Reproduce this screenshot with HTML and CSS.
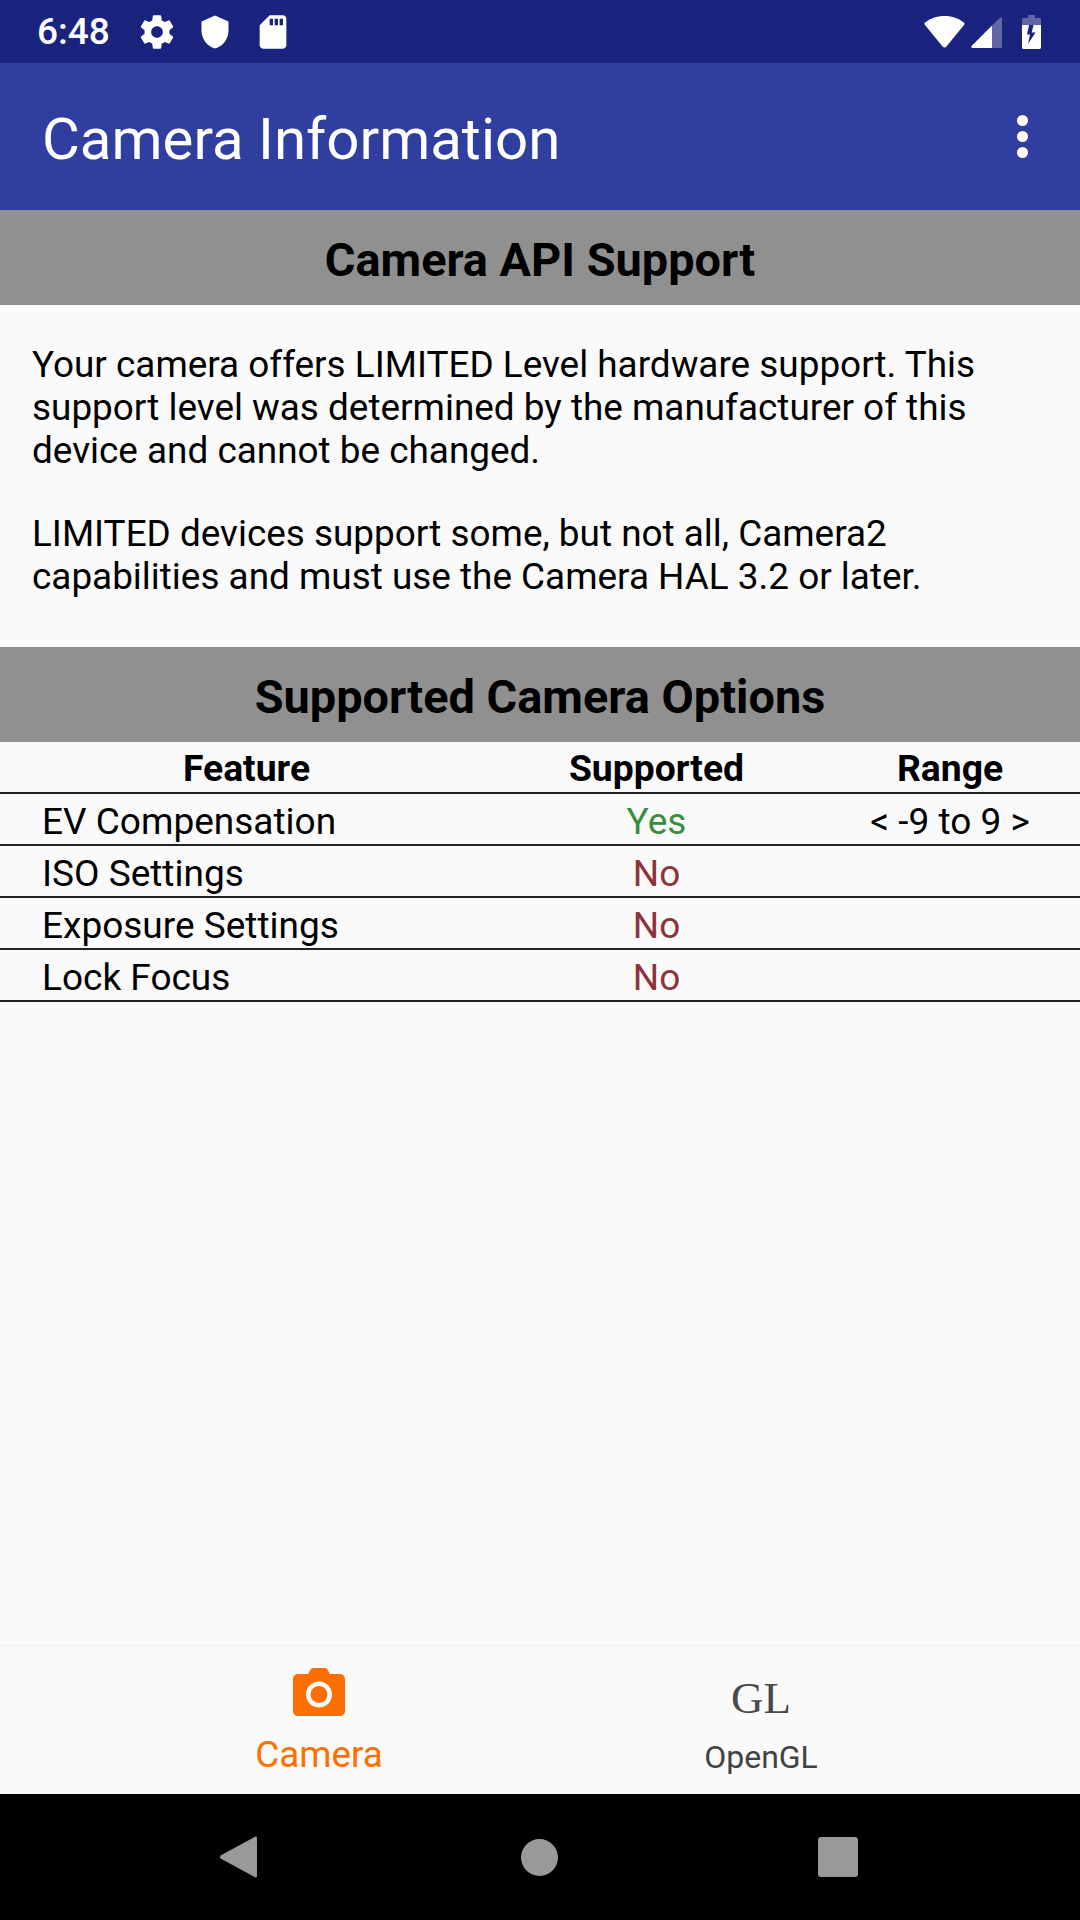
FILE: index.html
```html
<!DOCTYPE html>
<html lang="en">
<head>
    <meta charset="UTF-8">
    <meta name="viewport" content="width=device-width, initial-scale=1.0">
    <title>Camera Information</title>
    <link rel="stylesheet" href="styles.css">
</head>
<body>
    <div class="app">
        <!-- status bar -->
        <div class="statusbar">
            <span class="time">6:48</span>
            <svg class="st-gear" viewBox="0 0 24 24"><path fill="#fff" d="M19.43 12.98c.04-.32.07-.64.07-.98s-.03-.66-.07-.98l2.11-1.65c.19-.15.24-.42.12-.64l-2-3.46c-.12-.22-.39-.3-.61-.22l-2.49 1c-.52-.4-1.08-.73-1.69-.98l-.38-2.65C14.46 2.18 14.25 2 14 2h-4c-.25 0-.46.18-.49.42l-.38 2.65c-.61.25-1.17.59-1.69.98l-2.49-1c-.23-.09-.49 0-.61.22l-2 3.46c-.13.22-.07.49.12.64l2.11 1.65c-.04.32-.07.65-.07.98s.03.66.07.98l-2.11 1.65c-.19.15-.24.42-.12.64l2 3.46c.12.22.39.3.61.22l2.49-1c.52.4 1.08.73 1.69.98l.38 2.65c.03.24.24.42.49.42h4c.25 0 .46-.18.49-.42l.38-2.65c.61-.25 1.17-.59 1.69-.98l2.49 1c.23.09.49 0 .61-.22l2-3.46c.12-.22.07-.49-.12-.64l-2.11-1.65zM12 15.5c-1.93 0-3.5-1.57-3.5-3.5s1.57-3.5 3.5-3.5 3.5 1.57 3.5 3.5-1.57 3.5-3.5 3.5z"/></svg>
            <svg class="st-shield" viewBox="0 0 24 24"><path fill="#fff" d="M12 1L3 5v6c0 5.55 3.84 10.74 9 12 5.16-1.26 9-6.45 9-12V5l-9-4z"/></svg>
            <svg class="st-sd" viewBox="0 0 24 24"><path fill="#fff" d="M18 2h-8L4.02 8 4 20c0 1.1.9 2 2 2h12c1.1 0 2-.9 2-2V4c0-1.1-.9-2-2-2zm-6 6h-2V4h2v4zm3 0h-2V4h2v4zm3 0h-2V4h2v4z"/></svg>
            <span class="spacer"></span>
            <svg class="st-wifi" viewBox="0 0 42 33"><path fill="#fff" d="M21 0C13 0 6 2.6 1 6.8c-.8.7-.9 1.5-.3 2.2L19 31.5c1 1.3 3 1.3 4 0L41.300 9c.6-.7.5-1.500-.3-2.200C36 2.600 29 0 21 0z"/></svg>
            <svg class="st-signal" viewBox="0 0 31 31"><path fill="#fff" fill-opacity=".3" d="M31 1.500c0-1.200-1-1.800-2-.8L21 8.500V31h8.500c.9 0 1.500-.6 1.500-1.500z"/><path fill="#fff" d="M21 8.500L.6 28.900c-.8.8-.3 2.100.9 2.100H21z"/></svg>
            <svg class="st-battery" viewBox="0 0 19 34"><path fill="#fff" fill-opacity=".3" d="M13 3V1c0-.6-.4-1-1-1H7c-.6 0-1 .4-1 1v2H1.500C.7 3 0 3.700 0 4.500V10h19V4.500C19 3.700 18.300 3 17.500 3z"/><path fill="#fff" fill-rule="evenodd" d="M0 10v22.500C0 33.300.7 34 1.500 34h16c.8 0 1.500-.7 1.500-1.500V10zM11.500 10l-1.800 7.500h3.800L6 29l2-9.500H5L7 10z"/></svg>
        </div>

        <!-- toolbar -->
        <div class="toolbar">
            <h1>Camera Information</h1>
            <div class="overflow"><i></i><i></i><i></i></div>
        </div>

        <div class="content">
            <h2 class="section-title">Camera API Support</h2>
            <div class="about">
                <p>Your camera offers LIMITED Level hardware support. This support level was determined by the manufacturer of this device and cannot be changed.</p>
                <p>LIMITED devices support some, but not all, Camera2 capabilities and must use the Camera HAL 3.2 or later.</p>
            </div>

            <h2 class="section-title">Supported Camera Options</h2>
            <div class="options">
                <div class="row head">
                    <span>Feature</span>
                    <span>Supported</span>
                    <span>Range</span>
                </div>
                <div class="row">
                    <span class="name">EV Compensation</span>
                    <span class="yes">Yes</span>
                    <span>&lt; -9 to 9 &gt;</span>
                </div>
                <div class="row">
                    <span class="name">ISO Settings</span>
                    <span class="no">No</span>
                    <span></span>
                </div>
                <div class="row">
                    <span class="name">Exposure Settings</span>
                    <span class="no">No</span>
                    <span></span>
                </div>
                <div class="row">
                    <span class="name">Lock Focus</span>
                    <span class="no">No</span>
                    <span></span>
                </div>
            </div>
        </div>

        <!-- bottom tabs -->
        <div class="tabs">
            <div class="tab active">
                <svg class="tab-icon" viewBox="0 0 52 48"><path fill="#ff6f00" fill-rule="evenodd" d="M5 6h10l2.500-4.200C18.200.7 19 0 20.500 0h11c1.500 0 2.300.7 3 1.800L37 6h10c2.800 0 5 2.200 5 5v32c0 2.800-2.200 5-5 5H5c-2.800 0-5-2.200-5-5V11c0-2.800 2.200-5 5-5zm21 7.500a13 13 0 1 0 0 26 13 13 0 0 0 0-26zm0 4.500a8.500 8.500 0 1 1 0 17 8.500 8.500 0 0 1 0-17z"/></svg>
                <span class="tab-label">Camera</span>
            </div>
            <div class="tab">
                <span class="gl-icon">GL</span>
                <span class="tab-label">OpenGL</span>
            </div>
        </div>

        <!-- navigation bar -->
        <div class="navbar">
            <svg class="nav-back" viewBox="0 0 38 42"><path fill="#999" d="M36 .3L1 19.100c-1.300 1-1.300 2.800 0 3.800l35 18.800c1 .7 2 0 2-1.200V1.500c0-1.200-1-1.900-2-1.200z"/></svg>
            <span class="nav-home"></span>
            <span class="nav-recent"></span>
        </div>
    </div>
</body>
</html>
```

FILE: styles.css
```css
* {
    margin: 0;
    padding: 0;
    box-sizing: border-box;
}

body {
    background: #fafafa;
    font-family: Roboto, sans-serif;
    color: #000;
}

.app {
    display: flex;
    flex-direction: column;
    height: 1920px;
}

.statusbar {
    flex: 0 0 63px;
    display: flex;
    align-items: center;
    padding: 0 39px 0 37px;
    background: #1a237e;
    color: #fff;
}

.time {
    width: 71px;
    font-size: 37px;
    font-weight: 500;
}

.spacer {
    flex: 1;
}

.st-gear {
    width: 40px;
    height: 40px;
    margin-left: 29px;
}

.st-shield {
    width: 36px;
    height: 36px;
    margin-left: 20px;
}

.st-sd {
    width: 40px;
    height: 40px;
    margin-left: 20px;
}

.st-wifi {
    width: 41px;
    height: 32px;
}

.st-signal {
    width: 31px;
    height: 31px;
    margin-left: 6px;
    margin-top: 2px;
}

.st-battery {
    width: 19px;
    height: 34px;
    margin-left: 20px;
}

.toolbar {
    flex: 0 0 147px;
    display: flex;
    align-items: center;
    justify-content: space-between;
    padding: 4px 52px 0 42px;
    background: #303f9f;
}

.toolbar h1 {
    font-size: 58.200px;
    font-weight: 400;
    color: #fff;
}

.overflow {
    display: flex;
    flex-direction: column;
    gap: 5px;
    margin-top: -4px;
}

.overflow i {
    display: block;
    width: 11px;
    height: 11px;
    border-radius: 50%;
    background: #fff;
}

.content {
    flex: 1;
}

.section-title {
    height: 95px;
    padding-top: 4px;
    line-height: 91px;
    background: #909090;
    font-size: 46.900px;
    font-weight: 700;
    text-align: center;
}

.about {
    height: 342px;
    padding: 38px 32px 0;
    font-size: 36.900px;
    line-height: 43px;
}

.about p + p {
    margin-top: 40px;
}

.row {
    display: grid;
    grid-template-columns: 493px 327px 260px;
    height: 52px;
    padding-top: 5px;
    border-bottom: 2px solid #222;
    font-size: 37px;
    line-height: 45px;
    text-align: center;
}

.row.head {
    padding-top: 4px;
    font-size: 37.300px;
    font-weight: 700;
}

.name {
    padding-left: 42px;
    text-align: left;
}

.yes {
    color: #388e3c;
}

.no {
    color: #8e3339;
}

.tabs {
    flex: 0 0 147px;
    display: grid;
    grid-template-columns: 442px 442px;
    justify-content: center;
    background: #fafafa;
    box-shadow: 0 -2px 3px rgba(0, 0, 0, 0.04);
}

.tab {
    display: flex;
    flex-direction: column;
    align-items: center;
    padding-top: 21px;
    color: #424242;
}

.tab.active {
    color: #ff6f00;
}

.tab-icon {
    width: 52px;
    height: 48px;
    margin-bottom: 19px;
}

.tab-label {
    font-size: 32px;
    line-height: 40px;
}

.tab.active .tab-label {
    font-size: 36.750px;
}

.gl-icon {
    height: 69px;
    line-height: 60px;
    font-family: "Liberation Serif", serif;
    font-size: 45px;
    color: #4a4a4a;
}

.navbar {
    flex: 0 0 126px;
    display: flex;
    align-items: center;
    padding-left: 220px;
    background: #000;
}

.nav-back {
    width: 37px;
    height: 42px;
}

.nav-home {
    width: 37px;
    height: 37px;
    margin-left: 264px;
    border-radius: 50%;
    background: #999;
}

.nav-recent {
    width: 40px;
    height: 40px;
    margin-left: 260px;
    border-radius: 3px;
    background: #999;
}
```
